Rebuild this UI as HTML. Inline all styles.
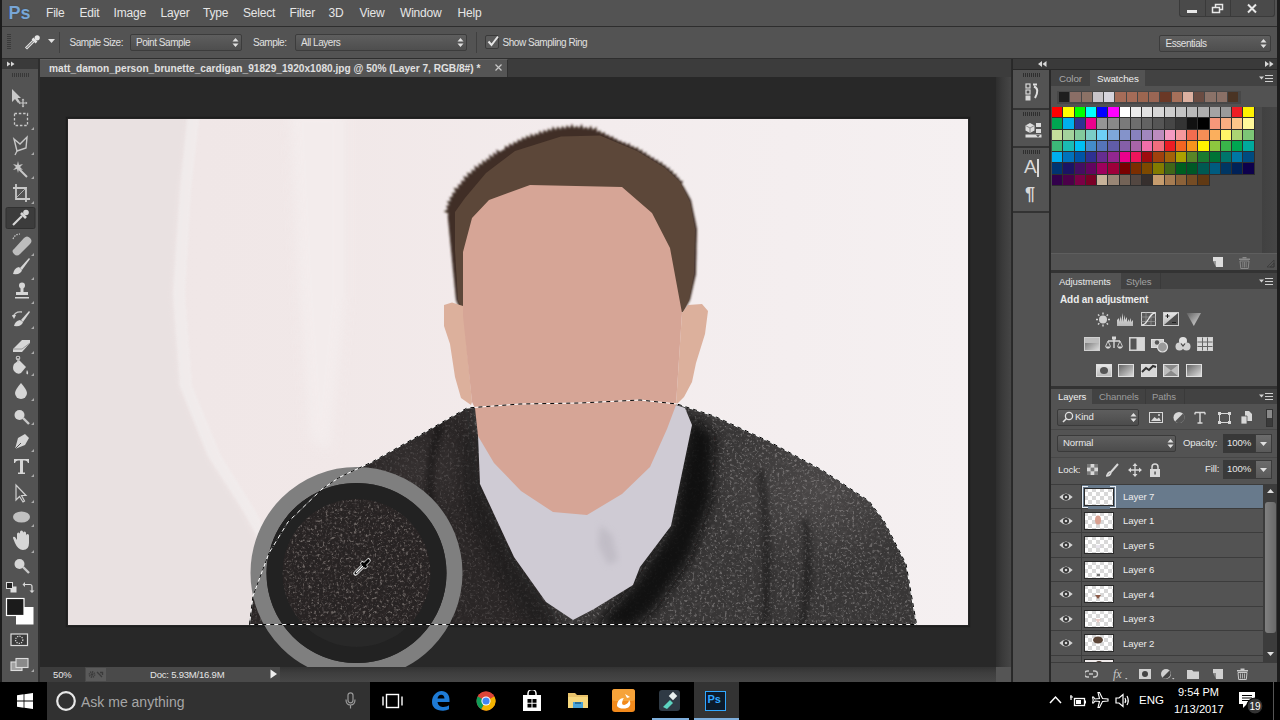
<!DOCTYPE html>
<html><head><meta charset="utf-8">
<style>
*{margin:0;padding:0;box-sizing:border-box}
html,body{width:1280px;height:720px;overflow:hidden;background:#535353;font-family:"Liberation Sans",sans-serif;color:#dcdcdc}
.a{position:absolute}
#sw i{position:absolute;width:10.25px;height:10.25px;display:block}
#rs b{position:absolute;top:92px;width:10.4px;height:10px;display:block}
.menu span{position:absolute;top:5.5px;font-size:12px;letter-spacing:-0.2px;color:#e6e6e6}
.opt{font-size:10px;letter-spacing:-0.45px;color:#e0e0e0}
</style></head><body>
<!-- left black strip -->
<div class="a" style="left:0;top:0;width:2px;height:682px;background:#1c1c1c"></div>
<!-- menu bar -->
<div class="a" style="left:2px;top:0;width:1278px;height:27px;background:#535353;border-bottom:1px solid #2e2e2e"></div>
<div class="a" style="left:8.5px;top:2.5px;font-size:18px;font-weight:bold;color:#78a6d6;letter-spacing:0px;text-shadow:0 0 1px #2a3a4a">Ps</div>
<div class="menu">
<span style="left:46px">File</span><span style="left:79.5px">Edit</span><span style="left:113.5px">Image</span><span style="left:160.5px">Layer</span><span style="left:203px">Type</span><span style="left:243px">Select</span><span style="left:289.5px">Filter</span><span style="left:328.5px">3D</span><span style="left:359.5px">View</span><span style="left:400px">Window</span><span style="left:457.5px">Help</span>
</div>
<!-- window controls -->
<div class="a" style="left:1179px;top:0;width:96px;height:17px;background:#4a4a4a;border:1px solid #3a3a3a;border-top:none;border-radius:0 0 3px 3px"></div>
<div class="a" style="left:1205px;top:0;width:1px;height:17px;background:#3a3a3a"></div>
<div class="a" style="left:1230px;top:0;width:1px;height:17px;background:#3a3a3a"></div>
<div class="a" style="left:1187px;top:10px;width:10px;height:3px;background:#e8e8e8"></div>
<svg class="a" style="left:1211px;top:3px" width="14" height="12"><rect x="4.5" y="1.5" width="7" height="5" fill="none" stroke="#e8e8e8" stroke-width="1.5"/><rect x="1.5" y="4.5" width="7" height="5" fill="#4a4a4a" stroke="#e8e8e8" stroke-width="1.5"/></svg>
<svg class="a" style="left:1246px;top:3px" width="12" height="11"><path d="M2 1.5L10 9.5M10 1.5L2 9.5" stroke="#e8e8e8" stroke-width="2"/></svg>

<!-- options bar -->
<div class="a" style="left:2px;top:27px;width:1278px;height:32px;background:#535353;border-bottom:1px solid #2e2e2e"></div>
<div class="a" style="left:7px;top:34px;width:4px;height:16px;background:repeating-linear-gradient(#3a3a3a 0 1px,transparent 1px 2px)"></div>
<svg class="a" style="left:24px;top:34px" width="17" height="16"><path d="M2 14.5 L10 6.5" stroke="#e6e6e6" stroke-width="3"/><path d="M2.5 14 L9.5 7" stroke="#535353" stroke-width="1"/><path d="M8.5 4.5 L12.5 8.5" stroke="#e6e6e6" stroke-width="2.5"/><circle cx="13.2" cy="3.8" r="2.6" fill="#e6e6e6"/></svg>
<svg class="a" style="left:48px;top:39px" width="7" height="5"><path d="M0 0H7L3.5 4z" fill="#e0e0e0"/></svg>
<div class="a" style="left:59px;top:32px;width:1px;height:21px;background:#404040"></div>
<div class="a opt" style="left:69.5px;top:37px">Sample Size:</div>
<div class="a" style="left:129.5px;top:34px;width:112px;height:17px;background:linear-gradient(#5e5e5e,#4e4e4e);border:1px solid #3c3c3c;border-radius:2px"></div>
<div class="a opt" style="left:136px;top:37px">Point Sample</div>
<svg class="a" style="left:232px;top:37px" width="7" height="11"><path d="M0.5 4.5L3.5 1L6.5 4.5zM0.5 6.5L3.5 10L6.5 6.5z" fill="#e0e0e0"/></svg>
<div class="a opt" style="left:253px;top:37px">Sample:</div>
<div class="a" style="left:294.5px;top:34px;width:172px;height:17px;background:linear-gradient(#5e5e5e,#4e4e4e);border:1px solid #3c3c3c;border-radius:2px"></div>
<div class="a opt" style="left:301px;top:37px">All Layers</div>
<svg class="a" style="left:457px;top:37px" width="7" height="11"><path d="M0.5 4.5L3.5 1L6.5 4.5zM0.5 6.5L3.5 10L6.5 6.5z" fill="#e0e0e0"/></svg>
<div class="a" style="left:476px;top:32px;width:1px;height:21px;background:#404040"></div>
<div class="a" style="left:485px;top:35px;width:14px;height:14px;background:#5a5a5a;border:1px solid #3a3a3a;border-radius:2px"></div>
<svg class="a" style="left:486px;top:34px" width="14" height="14"><path d="M2.5 7.5L5.5 11L12 2.5" fill="none" stroke="#e6e6e6" stroke-width="2"/></svg>
<div class="a opt" style="left:502.5px;top:37px">Show Sampling Ring</div>
<div class="a" style="left:1159px;top:34.5px;width:112px;height:17.5px;background:linear-gradient(#5e5e5e,#4e4e4e);border:1px solid #3c3c3c;border-radius:2px"></div>
<div class="a opt" style="left:1165.5px;top:37.5px">Essentials</div>
<svg class="a" style="left:1260px;top:38px" width="7" height="11"><path d="M0.5 4.5L3.5 1L6.5 4.5zM0.5 6.5L3.5 10L6.5 6.5z" fill="#e0e0e0"/></svg>

<!-- toolbar -->
<div class="a" style="left:2px;top:59px;width:38px;height:623px;background:#535353;border-right:2px solid #2e2e2e"></div>
<div class="a" style="left:2px;top:59px;width:36px;height:10px;background:#3a3a3a"></div>
<svg class="a" style="left:6.5px;top:61px" width="8" height="6"><path d="M0 0.5L3.5 3L0 5.5zM4 0.5L7.5 3L4 5.5z" fill="#d8d8d8"/></svg>
<div class="a" style="left:12px;top:73px;width:18px;height:4px;background:repeating-linear-gradient(90deg,#383838 0 1px,transparent 1px 2px)"></div>

<svg class="a" style="left:2px;top:80px" width="37" height="602" viewBox="0 80 37 602">
<g fill="#c8c8c8" stroke="none">
<!-- small corner triangles -->
<path d="M29 130h3v-3zM29 155h3v-3zM29 179h3v-3zM29 204h3v-3zM29 228h3v-3zM29 256h3v-3zM29 280h3v-3zM29 304h3v-3zM29 329h3v-3zM29 354h3v-3zM29 376h3v-3zM29 401h3v-3zM29 425h3v-3zM29 452h3v-3zM29 477h3v-3zM29 503h3v-3zM29 527h3v-3zM29 553h3v-3zM29 672h3v-3z" fill="#aaa"/>
<!-- move -->
<path d="M10 89L10 102L13 99L16 103L18 102L15.5 98L19 98Z"/>
<path d="M21 100V106M18 103H24" stroke="#c8c8c8" stroke-width="1.2"/>
<path d="M21 98.5L19.5 100.2H22.5ZM21 107.5L19.5 105.8H22.5ZM16.5 103L18.2 101.5V104.5ZM25.5 103L23.8 101.5V104.5Z"/>
</g>
<g fill="none" stroke="#c8c8c8">
<!-- marquee -->
<rect x="12.5" y="113.5" width="13" height="12" stroke-dasharray="2.5 1.8" stroke-width="1.3"/>
<!-- lasso -->
<path d="M12 139L18 144L25 137L24 148L15 151Z" stroke-width="1.4"/>
<path d="M15 151L13 155" stroke-width="1.2"/>
</g>
<g fill="#c8c8c8">
<!-- magic wand -->
<path d="M15 165L16 161L17 165L21 164L18 167L21 170L17 169L16 173L15 169L11 170L14 167L11 164Z"/>
<path d="M17 169L25 177" stroke="#c8c8c8" stroke-width="2"/>
</g>
<g fill="none" stroke="#c8c8c8" stroke-width="1.8">
<!-- crop -->
<path d="M14 184V199H28M11 188H24V202"/>
<path d="M14 198L25 187" stroke-width="0.8"/>
</g>
<!-- eyedropper selected box -->
<rect x="4" y="207.5" width="29" height="21" fill="#3c3c3c" stroke="#303030" stroke-width="1" rx="1.5"/>
<g fill="#d6d6d6">
<path d="M11 225L20 216" stroke="#d6d6d6" stroke-width="2.2"/>
<path d="M19 213L24 218" stroke="#d6d6d6" stroke-width="2.6"/>
<circle cx="24" cy="212.5" r="2.8"/>
<g transform="translate(0,-3)"><!-- healing -->
<path d="M12 252L22 241Q25 238 28 241Q31 244 28 247L18 257Q15 260 12 257Q9 254 12 252Z" fill="#bdbdbd"/>
<path d="M11 242Q13 237 18 237" fill="none" stroke="#c8c8c8" stroke-width="1.2" stroke-dasharray="1.5 1.2"/>
</g><!-- brush -->
<path d="M18 268L27 258L28 259L20 270Z"/>
<path d="M11 274Q12 268 17 267L20 270Q19 275 11 274Z"/>
<!-- stamp -->
<circle cx="20" cy="285.5" r="3"/>
<path d="M18.5 287H21.5V292H26V295H14V292H18.5Z"/>
<rect x="13" y="297" width="14" height="1.5"/>
<!-- history brush -->
<path d="M19 320L27 311L28 312L21 322Z"/>
<path d="M12 326Q13 321 18 320L21 322Q20 327 12 326Z"/>
<path d="M11 317Q13 311 20 312" fill="none" stroke="#c8c8c8" stroke-width="1.3"/>
<path d="M10 315L12 319L14 315Z"/>
<g transform="translate(0,3)"><!-- eraser -->
<path d="M11 346L20 337H28L28 340L20 349H11Z"/>
<path d="M11 346H20L28 340" fill="none" stroke="#888" stroke-width="0.8"/>
<!-- paint bucket -->
<path d="M12 361L17 357L24 364L19 370Q15 372 12 368Q10 365 12 361Z"/>
<path d="M16 355V360" stroke="#c8c8c8" stroke-width="1.3"/>
<circle cx="16" cy="355" r="1.8" fill="none" stroke="#c8c8c8" stroke-width="1.1"/>
<path d="M25 367Q27 370 25.5 371.5Q23.5 371 25 367Z"/>
</g><!-- blur drop -->
<path d="M19 383Q25 390 25 393A6 6 0 0 1 13 393Q13 390 19 383Z"/>
<g transform="translate(0,2)"><!-- dodge / zoom glass -->
<circle cx="17.5" cy="413" r="5"/>
<path d="M21 416L27 422" stroke="#c8c8c8" stroke-width="2.4"/>
</g><!-- pen -->
<path d="M13 449L16 438L23 434L27 438L23 445ZM18 441L20 443" />
<path d="M13 449L19 443" stroke="#535353" stroke-width="1"/>
<!-- type -->
<path d="M12 459H27V463H26Q25.5 460.5 23 460.5H21V472.5H23V474H16V472.5H18V460.5H16Q13.5 460.5 13 463H12Z"/>
<!-- path select -->
<path d="M14 485V500L17.5 496.5L21 502L22.5 501L19.5 495.5H24Z" fill="none" stroke="#d0d0d0" stroke-width="1.2"/>
<!-- ellipse -->
<ellipse cx="19.5" cy="517" rx="8.5" ry="5.5" fill="#c0c0c0"/>
<!-- hand -->
<path d="M13 543L11 538Q11 536 13 537L15 540V534Q15 532.5 16.5 532.5Q18 532.5 18 534V539V532Q18 530.5 19.5 530.5Q21 530.5 21 532V539V533Q21 531.5 22.5 531.5Q24 531.5 24 533V540V535.5Q24 534 25.5 534Q27 534 27 535.5V543Q27 550 21 550Q16 550 13 543Z"/>
<!-- zoom -->
<circle cx="17.5" cy="564" r="5"/>
<path d="M21 567L27 573" stroke="#c8c8c8" stroke-width="2.4"/>
<!-- default colors & swap -->
<rect x="8.5" y="586.5" width="6" height="6" fill="#ddd"/>
<rect x="4.5" y="582.5" width="6" height="6" fill="#222" stroke="#ddd" stroke-width="1"/>
<path d="M22.5 584.5H28Q30 584.5 30 586.5V591" fill="none" stroke="#ddd" stroke-width="1.2"/>
<path d="M20.5 584.5L23 582V587ZM30 593L27.5 590.5H32.5Z"/>
</g>
<!-- fg/bg -->
<rect x="14" y="607" width="17.5" height="17.5" fill="#fff"/>
<rect x="4.5" y="598.5" width="17.5" height="17" fill="#1b1b1b" stroke="#fff" stroke-width="1.2"/>
<!-- quick mask -->
<rect x="9" y="634" width="16.5" height="11.5" fill="#3a3a3a" stroke="#ddd" stroke-width="1.2"/>
<circle cx="17.2" cy="639.8" r="3.6" fill="none" stroke="#ddd" stroke-width="1.2" stroke-dasharray="1.2 1.2"/>
<!-- screen mode -->
<rect x="9" y="662" width="11" height="8.5" fill="#a0a0a0" stroke="#ddd" stroke-width="1.1"/>
<rect x="14" y="658.5" width="12" height="9" fill="#8a8a8a" stroke="#ddd" stroke-width="1.1"/>
</svg>


<!-- doc tab bar -->
<div class="a" style="left:40px;top:59px;width:972px;height:18px;background:#3c3c3c"></div>
<div class="a" style="left:40px;top:59px;width:468px;height:18px;background:#555;border-top:1px solid #606060;border-right:1px solid #303030"></div>
<div class="a" style="left:49px;top:62.5px;font-size:10.15px;font-weight:bold;color:#e0e0e0">matt_damon_person_brunette_cardigan_91829_1920x1080.jpg @ 50% (Layer 7, RGB/8#) *</div>
<svg class="a" style="left:495px;top:64px" width="7" height="7"><path d="M0.5 0.5L6.5 6.5M6.5 0.5L0.5 6.5" stroke="#c8c8c8" stroke-width="1.2"/></svg>
<!-- canvas -->
<div class="a" style="left:40px;top:77px;width:956px;height:590px;background:#282828"></div>
<div class="a" style="left:996px;top:77px;width:16px;height:590px;background:linear-gradient(90deg,#2e2e2e,#3a3a3a 40%,#474747)"></div><div class="a" style="left:1011px;top:59px;width:2px;height:623px;background:#2a2a2a"></div>
<svg class="a" style="left:0;top:0" width="1280" height="720" viewBox="0 0 1280 720">
<defs>
<clipPath id="img"><rect x="68" y="119" width="900" height="506"/></clipPath>
<clipPath id="cv"><rect x="40" y="77" width="956" height="590"/></clipPath>
<clipPath id="swc"><path d="M249 625 L253 596 L269 553 L288 522 L322 489 L340 477 L372 462 L420 435 L467 408 L520 404 L600 404 L677 404 L714 416 L768 441 L822 470 L869 501 L884 521 L906 564 L917 625 Z"/></clipPath>
<linearGradient id="bg" gradientUnits="userSpaceOnUse" x1="68" y1="0" x2="968" y2="0">
<stop offset="0" stop-color="#efe6e6"/><stop offset="0.3" stop-color="#f1e8e8"/><stop offset="0.6" stop-color="#f3eced"/><stop offset="1" stop-color="#f5f0f1"/>
</linearGradient>
<radialGradient id="shl" cx="0.5" cy="0.5" r="0.5"><stop offset="0" stop-color="#5a5656" stop-opacity="0.55"/><stop offset="1" stop-color="#5a5656" stop-opacity="0"/></radialGradient>
<filter id="noise" x="0" y="0" width="100%" height="100%">
<feTurbulence type="fractalNoise" baseFrequency="0.5" numOctaves="1" seed="7" result="n"/>
<feGaussianBlur in="n" stdDeviation="0.9" result="nb"/>
<feColorMatrix in="nb" type="matrix" values="0 0 0 0 0.5  0 0 0 0 0.48  0 0 0 0 0.48  0 0 0 3.5 -1.75" result="c"/>
<feComposite in="c" in2="SourceGraphic" operator="in"/>
</filter>
<filter id="noise2" x="0" y="0" width="100%" height="100%">
<feTurbulence type="fractalNoise" baseFrequency="0.35" numOctaves="2" seed="11" result="n"/>
<feColorMatrix in="n" type="matrix" values="0 0 0 0 0.36  0 0 0 0 0.32  0 0 0 0 0.3  0 0 0 5 -2.9" result="c0"/>
<feGaussianBlur in="c0" stdDeviation="0.6" result="c"/>
<feComposite in="c" in2="SourceGraphic" operator="in"/>
</filter>
<filter id="speck" x="0" y="0" width="100%" height="100%">
<feTurbulence type="fractalNoise" baseFrequency="0.4" numOctaves="2" seed="21" result="n"/>
<feColorMatrix in="n" type="matrix" values="0 0 0 0 0.5  0 0 0 0 0.48  0 0 0 0 0.48  0 0 0 6 -3.4" result="c0"/>
<feGaussianBlur in="c0" stdDeviation="0.6" result="c"/>
<feComposite in="c" in2="SourceGraphic" operator="in"/>
</filter>
<filter id="blur1"><feGaussianBlur stdDeviation="0.9"/></filter>
<filter id="blur3" x="-20%" y="-20%" width="140%" height="140%"><feGaussianBlur stdDeviation="3"/></filter>
<filter id="blur6" x="-30%" y="-30%" width="160%" height="160%"><feGaussianBlur stdDeviation="6"/></filter>
</defs>
<rect x="66.5" y="117.5" width="903" height="509" fill="none" stroke="#1c1c1c" stroke-width="1.5" opacity="0.8"/>
<g clip-path="url(#img)">
<rect x="68" y="119" width="900" height="506" fill="url(#bg)"/>
<path filter="url(#blur3)" fill="#e9e1e1" d="M60 110 L190 110 L180 189 L173 295 L180 386 L208 456 L244 512 L258 541 L270 630 L60 630 Z"/>
<path filter="url(#blur1)" fill="#f2efef" opacity="0.6" d="M188 110 L200 110 L191 189 L185 295 L192 386 L221 456 L256 512 L270 541 L262 545 L244 512 L208 456 L180 386 L173 295 L180 189 Z"/>
<path filter="url(#blur6)" fill="#f4eeee" opacity="0.8" d="M290 110 L345 110 L345 300 L330 450 L310 440 L300 300 Z"/>
<!-- hair -->
<path fill="#3f2f25" filter="url(#blur1)" d="M461.0 312.0 L460.0 309.6 L459.0 307.2 L458.0 304.8 L457.0 302.4 L456.0 300.0 L455.8 297.7 L455.5 295.5 L455.3 293.2 L455.1 290.9 L454.9 288.6 L454.6 286.4 L454.4 284.1 L454.2 281.8 L454.0 279.5 L453.7 277.3 L453.5 275.0 L453.3 272.7 L453.0 270.5 L452.8 268.2 L452.6 265.9 L452.4 263.6 L452.1 261.4 L451.9 259.1 L451.7 256.8 L451.5 254.5 L451.2 252.3 L451.0 250.0 L450.8 247.7 L450.6 245.4 L450.3 243.2 L450.1 240.9 L449.9 238.6 L449.7 236.3 L449.4 234.1 L449.2 231.8 L449.0 229.5 L448.8 227.2 L448.6 224.9 L448.3 222.7 L448.1 220.4 L447.9 218.1 L447.7 215.8 L448.4 213.5 L443.8 211.6 L448.0 209.1 L445.8 206.0 L449.6 205.0 L446.6 201.4 L451.2 200.7 L449.1 197.4 L452.8 196.5 L452.0 192.8 L455.8 192.6 L453.6 187.8 L458.8 188.6 L457.6 184.6 L461.7 184.6 L460.9 180.6 L465.0 181.0 L463.2 175.9 L468.4 177.3 L466.7 172.4 L471.7 173.7 L471.3 169.6 L475.3 170.7 L474.1 165.6 L478.9 167.7 L478.3 163.2 L482.6 164.8 L482.0 160.1 L486.2 162.2 L486.1 158.3 L489.8 159.7 L489.0 154.6 L493.5 157.2 L492.9 152.4 L497.1 154.6 L496.2 149.5 L500.7 152.1 L502.0 150.0 L504.5 149.8 L505.0 145.6 L508.7 147.6 L509.2 143.3 L512.9 145.4 L513.6 141.4 L517.1 143.2 L517.8 139.3 L521.3 141.0 L522.2 137.1 L525.4 139.2 L526.5 135.2 L529.8 137.8 L530.7 133.3 L534.1 136.5 L535.3 133.0 L538.4 135.1 L539.2 130.4 L542.7 133.7 L543.8 129.6 L547.0 132.3 L548.1 128.3 L551.2 130.9 L552.8 126.2 L555.8 130.3 L557.6 126.2 L560.5 129.6 L562.3 125.8 L565.1 129.0 L566.9 124.9 L569.8 128.3 L571.9 123.7 L574.2 128.2 L576.9 125.4 L578.9 128.6 L581.7 124.1 L583.6 129.1 L586.2 126.4 L588.2 129.5 L591.0 125.4 L592.7 129.9 L596.6 126.8 L596.9 131.9 L600.3 130.2 L601.3 133.5 L604.6 132.1 L605.6 135.5 L608.7 134.5 L609.8 137.5 L612.9 136.1 L614.0 139.3 L616.8 138.6 L618.1 141.2 L620.9 140.4 L622.3 143.0 L625.2 142.1 L626.4 144.9 L629.7 143.1 L630.5 146.8 L633.4 145.8 L634.7 148.6 L638.0 147.1 L638.7 150.7 L642.2 149.4 L642.7 153.2 L646.2 151.9 L646.7 155.6 L649.8 154.9 L650.7 158.0 L653.8 157.3 L654.7 160.4 L657.9 159.6 L658.7 162.9 L662.1 161.8 L662.7 165.3 L665.8 164.9 L666.3 168.0 L669.8 167.6 L669.6 171.1 L673.1 170.6 L672.9 174.2 L676.5 173.7 L676.3 177.3 L679.2 177.5 L679.5 180.4 L683.1 180.9 L681.7 184.3 L683.3 186.0 L684.4 188.0 L685.5 190.0 L686.6 192.0 L687.7 194.0 L688.8 196.0 L689.9 198.0 L691.0 200.0 L691.5 202.2 L691.9 204.5 L692.4 206.7 L692.8 208.9 L693.3 211.2 L693.8 213.4 L694.2 215.6 L694.7 217.8 L695.2 220.1 L695.6 222.3 L696.1 224.5 L696.5 226.8 L697.0 229.0 L697.0 231.2 L696.9 233.5 L696.9 235.8 L696.8 238.0 L696.8 240.2 L696.7 242.5 L696.6 244.8 L696.6 247.0 L696.5 249.2 L696.5 251.5 L696.5 253.8 L696.4 256.0 L696.4 258.2 L696.3 260.5 L696.2 262.8 L696.2 265.0 L696.1 267.2 L696.1 269.5 L696.0 271.8 L696.0 274.0 L695.5 276.2 L695.0 278.3 L694.5 280.5 L694.0 282.7 L693.5 284.8 L693.0 287.0 L692.5 289.2 L692.0 291.3 L691.5 293.5 L691.0 295.7 L690.5 297.8 L690.0 300.0 L688.8 302.0 L687.7 304.0 L686.5 306.0 L685.3 308.0 L684.2 310.0 L683.0 312.0 Z"/>
<path fill="#5c4739" d="M463 312 L458 300 L455 250 L455 212 L465 198 L486 173 L515 151 L561 136.5 L600 135.5 L637 151 L665 168 L680 182 L690 202 L695 229 L694 274 L689 300 L683 312 Z"/>
<!-- sweater -->
<g clip-path="url(#swc)">
<rect x="240" y="400" width="690" height="230" fill="#383636"/>
<ellipse cx="820" cy="490" rx="110" ry="80" fill="url(#shl)"/>
<ellipse cx="420" cy="470" rx="70" ry="45" fill="url(#shl)"/>
<rect x="240" y="400" width="690" height="230" fill="#333131" filter="url(#noise)" opacity="0.45"/>
<rect x="240" y="400" width="690" height="230" fill="#333131" filter="url(#speck)" opacity="0.35"/>
<path fill="#1a1818" opacity="0.45" filter="url(#blur6)" d="M240 470 L470 400 L482 484 L515 557 L546 602 L560 630 L240 630 Z"/>
<path fill="#0b0a0a" opacity="0.9" filter="url(#blur6)" d="M690 415 L715 435 L712 500 L690 560 L655 610 L630 630 L596 625 L633 585 L671 526 Z"/>
<path fill="#151414" opacity="0.45" filter="url(#blur6)" d="M465 430 L480 440 L482 484 L515 557 L546 602 L560 630 L530 630 L500 580 L470 520 L462 470 Z"/>
<path fill="none" stroke="#000" stroke-width="6" opacity="0.45" filter="url(#blur3)" d="M760 470 Q770 540 765 625 M805 520 Q812 570 802 625 M440 425 Q425 470 432 520 Q440 570 450 625"/>
</g>
<!-- ears -->
<path fill="#dcb09c" d="M444 305 L452 302.5 L463 306 L472 402 L471 405 L461 398 L455 377 L450 344 L444 326 Z"/>
<path fill="#dcb09c" d="M682 313 L688 305 L702 304 L708 311 L705 334 L696 363 L692 382 L684 397 L676 405 Z"/>
<!-- collar -->
<path fill="#cfcbd4" d="M478 435 L480 484 L514 557 L546 602 L573 620 L594 609 L633 585 L640 567 L671 526 L692 425 L685 408 L676 405 L600 420 L500 420 Z"/>
<path fill="#b8b4bd" opacity="0.6" filter="url(#blur3)" d="M600 525 L612 535 L618 560 L608 565 L598 545 Z"/>
<!-- face -->
<path fill="#d6a596" d="M489 200 L530 185 L622 187 L652 213 L670 248 L682 313 L676 405 L667 429 L650 467 L622 494 L587 515 L553 512 L521 491 L494 463 L478 436 L475 408 L472 402 L463 316 L463 252 L472 218 Z"/>
</g>
<!-- sampling ring -->
<g clip-path="url(#cv)">
<g clip-path="url(#img)"><circle cx="356.5" cy="573" r="74" fill="#0f0e0d" opacity="0.1"/><circle cx="356.5" cy="573" r="74" fill="#7a6e66" filter="url(#noise2)" opacity="0.55"/></g>
<circle cx="356.5" cy="573" r="98" fill="none" stroke="#7f7f7f" stroke-width="16"/>
<path fill="#222222" fill-rule="evenodd" d="M356.5 483 a90 90 0 1 0 0.01 0 Z M356.5 499 a74 74 0 1 0 0.01 0 Z"/>
</g>
<!-- selection marching ants -->
<g clip-path="url(#img)" fill="none" stroke-width="1">
<path d="M249.5 624.5 L253 596 L269 553 L288 522 L322 489 L340 477 L372 462 L420 435 L467 408 L520 404 L580 403 L640 400 L677 404 L714 416 L768 441 L822 470 L869 501 L884 521 L906 564 L916.5 624.5 Z" stroke="#ffffff"/>
<path d="M249.5 624.5 L253 596 L269 553 L288 522 L322 489 L340 477 L372 462 L420 435 L467 408 L520 404 L580 403 L640 400 L677 404 L714 416 L768 441 L822 470 L869 501 L884 521 L906 564 L916.5 624.5 Z" stroke="#000" stroke-dasharray="4 4"/>
</g>
<svg x="352" y="557" width="20" height="20"><g stroke="#ddd" stroke-width="4.5" stroke-linecap="round" fill="none"><path d="M3.5 16.5L12 8"/><path d="M10.5 6.5L13.5 9.5"/><path d="M13 7L16.5 3.5"/></g><g stroke-linecap="round" fill="none"><path d="M3.8 16.2L11.5 8.5" stroke="#111" stroke-width="2.6"/><path d="M4.5 15.5L10.5 9.5" stroke="#fff" stroke-width="1.2"/><path d="M10.5 6.5L13.5 9.5" stroke="#000" stroke-width="2.8"/><path d="M13 7L16.3 3.7" stroke="#000" stroke-width="3"/></g></svg>
</svg>

<!-- status bar -->
<div class="a" style="left:40px;top:667px;width:956px;height:15px;background:linear-gradient(#333,#3e3e3e 40%,#474747)"></div><div class="a" style="left:40px;top:667px;width:45px;height:15px;background:#3c3c3c"></div>
<div class="a" style="left:85px;top:667px;width:195px;height:15px;background:#4a4a4a"></div>
<div class="a" style="left:86px;top:668px;width:20px;height:13px;background:#5a5a5a"></div><svg class="a" style="left:88px;top:670px" width="17" height="9"><circle cx="4" cy="4.5" r="2.6" fill="none" stroke="#3a3a3a" stroke-width="1.6" stroke-dasharray="1.2 0.8"/><circle cx="4" cy="4.5" r="1.2" fill="#3a3a3a"/><path d="M9 2L14 7M12 2.5L14.5 2.5L14.5 5" fill="none" stroke="#3a3a3a" stroke-width="1.3"/></svg>
<div class="a" style="left:53px;top:669px;font-size:9.5px;letter-spacing:-0.1px;color:#e6e6e6">50%</div>
<div class="a" style="left:150px;top:669px;font-size:9.5px;letter-spacing:-0.2px;color:#e6e6e6">Doc: 5.93M/16.9M</div>
<svg class="a" style="left:270px;top:669px" width="8" height="10"><path d="M0.5 0.5L7 5L0.5 9.5z" fill="#f0f0f0"/></svg>

<!-- right dock -->
<div class="a" style="left:1012px;top:59px;width:268px;height:623px;background:#282828"></div>
<div class="a" style="left:1013px;top:59px;width:264px;height:10px;background:#3a3a3a"></div>
<svg class="a" style="left:1038px;top:61px" width="9" height="6"><path d="M4 0L0 3L4 6zM8.5 0L4.5 3L8.5 6z" fill="#d8d8d8"/></svg>
<svg class="a" style="left:1265px;top:61px" width="9" height="6"><path d="M0 0L4 3L0 6zM4.5 0L8.5 3L4.5 6z" fill="#d8d8d8"/></svg>
<div class="a" style="left:1013px;top:70px;width:36px;height:612px;background:#535353"></div><div class="a" style="left:996px;top:667px;width:15px;height:15px;background:#555"></div>
<div class="a" style="left:1013px;top:107.5px;width:36px;height:2px;background:#333"></div>
<div class="a" style="left:1013px;top:145.5px;width:36px;height:2px;background:#333"></div>
<div class="a" style="left:1013px;top:210.5px;width:36px;height:2px;background:#333"></div>
<div class="a" style="left:1023px;top:73px;width:18px;height:4px;background:repeating-linear-gradient(90deg,#2e2e2e 0 1px,transparent 1px 2px)"></div>
<div class="a" style="left:1023px;top:111.5px;width:18px;height:4px;background:repeating-linear-gradient(90deg,#2e2e2e 0 1px,transparent 1px 2px)"></div>
<div class="a" style="left:1023px;top:150px;width:18px;height:4px;background:repeating-linear-gradient(90deg,#2e2e2e 0 1px,transparent 1px 2px)"></div>
<svg class="a" style="left:1025px;top:83px" width="16" height="18"><rect x="1" y="1" width="4" height="4" fill="none" stroke="#d8d8d8" stroke-width="1.2"/><rect x="1" y="7" width="4" height="4" fill="none" stroke="#d8d8d8" stroke-width="1.2"/><rect x="0.5" y="12.5" width="5" height="5" fill="#d8d8d8"/><path d="M8 1.5H12 M9 3.5 Q15 6 10 15" fill="none" stroke="#e0e0e0" stroke-width="2"/></svg>
<svg class="a" style="left:1025px;top:122px" width="17" height="16"><path d="M5 1L9.5 3.5V8.5L5 11L0.5 8.5V3.5Z" fill="#ddd"/><path d="M0.5 3.5L5 6L9.5 3.5M5 6V11" fill="none" stroke="#777" stroke-width="0.8"/><rect x="11" y="1" width="5" height="4" fill="#ddd"/><rect x="11" y="7" width="5" height="4" fill="#ddd"/><rect x="0.5" y="12.5" width="16" height="3" fill="#ddd"/><path d="M11 13.2h4l-2 1.8z" fill="#333"/></svg>
<div class="a" style="left:1024px;top:157px;font-size:19px;color:#d8d8d8;line-height:20px">A</div>
<div class="a" style="left:1037px;top:159px;width:1.5px;height:18px;background:#d8d8d8"></div>
<div class="a" style="left:1025px;top:184px;font-size:18px;font-weight:bold;color:#d8d8d8;line-height:20px">¶</div>

<!-- panels -->
<div class="a" style="left:1051px;top:70px;width:226px;height:612px;background:#535353"></div>
<div class="a" style="left:1051px;top:70px;width:226px;height:16px;background:#424242"></div>
<div class="a" style="left:1090px;top:70px;width:55px;height:16px;background:#535353"></div>
<div class="a" style="left:1059px;top:73px;font-size:9.8px;letter-spacing:-0.1px;color:#a8a8a8">Color</div>
<div class="a" style="left:1097px;top:73px;font-size:9.8px;letter-spacing:-0.1px;color:#f0f0f0">Swatches</div>
<svg class="a" style="left:1259px;top:74px" width="15" height="10"><path d="M0 2.5H5L2.5 5.5z" fill="#d0d0d0"/><path d="M6 1.5H14M6 4.5H14M6 7.5H14" stroke="#d0d0d0" stroke-width="1.2"/></svg>
<div class="a" style="left:1051px;top:86px;width:226px;height:20.5px;background:#525252"></div>
<div class="a" style="left:1051px;top:106.5px;width:211px;height:146.5px;background:#4a4a4a"></div>
<div class="a" style="left:1262px;top:106.5px;width:15px;height:146.5px;background:linear-gradient(90deg,#414141,#464646)"></div>
<div class="a" style="left:1057px;top:90.5px;width:184px;height:13px;background:#474747"></div>
<div id="rs">
<b style="left:1059.00px;background:#1e1e1e"></b>
<b style="left:1070.25px;background:#8a6e66"></b>
<b style="left:1081.50px;background:#8c7266"></b>
<b style="left:1092.75px;background:#c8c4c8"></b>
<b style="left:1104.00px;background:#d6d4dc"></b>
<b style="left:1115.25px;background:#a56c58"></b>
<b style="left:1126.50px;background:#a56c58"></b>
<b style="left:1137.75px;background:#9c6650"></b>
<b style="left:1149.00px;background:#9a6654"></b>
<b style="left:1160.25px;background:#6a3826"></b>
<b style="left:1171.50px;background:#a6705a"></b>
<b style="left:1182.75px;background:#dcb0a0"></b>
<b style="left:1194.00px;background:#6a4c42"></b>
<b style="left:1205.25px;background:#8a7268"></b>
<b style="left:1216.50px;background:#8a7066"></b>
<b style="left:1227.75px;background:#4a3424"></b>
</div>
<div id="sw">
<div class="a" style="left:1051.5px;top:106.5px;width:203px;height:68.5px;background:#2e2e2e"></div>
<div class="a" style="left:1051.5px;top:174.5px;width:158.5px;height:11.5px;background:#2e2e2e"></div>
<i style="left:1052.00px;top:107.00px;background:#ff0000"></i>
<i style="left:1063.25px;top:107.00px;background:#ffff00"></i>
<i style="left:1074.50px;top:107.00px;background:#00ff00"></i>
<i style="left:1085.75px;top:107.00px;background:#00ffff"></i>
<i style="left:1097.00px;top:107.00px;background:#0000ff"></i>
<i style="left:1108.25px;top:107.00px;background:#ff00ff"></i>
<i style="left:1119.50px;top:107.00px;background:#ffffff"></i>
<i style="left:1130.75px;top:107.00px;background:#ebebeb"></i>
<i style="left:1142.00px;top:107.00px;background:#e1e1e1"></i>
<i style="left:1153.25px;top:107.00px;background:#d7d7d7"></i>
<i style="left:1164.50px;top:107.00px;background:#cdcdcd"></i>
<i style="left:1175.75px;top:107.00px;background:#c3c3c3"></i>
<i style="left:1187.00px;top:107.00px;background:#b9b9b9"></i>
<i style="left:1198.25px;top:107.00px;background:#aeaeae"></i>
<i style="left:1209.50px;top:107.00px;background:#a4a4a4"></i>
<i style="left:1220.75px;top:107.00px;background:#9a9a9a"></i>
<i style="left:1232.00px;top:107.00px;background:#ed1c24"></i>
<i style="left:1243.25px;top:107.00px;background:#fff200"></i>
<i style="left:1052.00px;top:118.25px;background:#00a651"></i>
<i style="left:1063.25px;top:118.25px;background:#00aeef"></i>
<i style="left:1074.50px;top:118.25px;background:#2e3192"></i>
<i style="left:1085.75px;top:118.25px;background:#ec008c"></i>
<i style="left:1097.00px;top:118.25px;background:#959595"></i>
<i style="left:1108.25px;top:118.25px;background:#898989"></i>
<i style="left:1119.50px;top:118.25px;background:#7a7a7a"></i>
<i style="left:1130.75px;top:118.25px;background:#6e6e6e"></i>
<i style="left:1142.00px;top:118.25px;background:#626262"></i>
<i style="left:1153.25px;top:118.25px;background:#555555"></i>
<i style="left:1164.50px;top:118.25px;background:#464646"></i>
<i style="left:1175.75px;top:118.25px;background:#343434"></i>
<i style="left:1187.00px;top:118.25px;background:#111111"></i>
<i style="left:1198.25px;top:118.25px;background:#000000"></i>
<i style="left:1209.50px;top:118.25px;background:#f7977a"></i>
<i style="left:1220.75px;top:118.25px;background:#f9ad81"></i>
<i style="left:1232.00px;top:118.25px;background:#fdc68a"></i>
<i style="left:1243.25px;top:118.25px;background:#fff79a"></i>
<i style="left:1052.00px;top:129.50px;background:#c4df9b"></i>
<i style="left:1063.25px;top:129.50px;background:#a3d39c"></i>
<i style="left:1074.50px;top:129.50px;background:#82ca9d"></i>
<i style="left:1085.75px;top:129.50px;background:#7bcdc8"></i>
<i style="left:1097.00px;top:129.50px;background:#6ecff6"></i>
<i style="left:1108.25px;top:129.50px;background:#7ea7d8"></i>
<i style="left:1119.50px;top:129.50px;background:#8493ca"></i>
<i style="left:1130.75px;top:129.50px;background:#8882be"></i>
<i style="left:1142.00px;top:129.50px;background:#a187be"></i>
<i style="left:1153.25px;top:129.50px;background:#bc8cbf"></i>
<i style="left:1164.50px;top:129.50px;background:#f49ac2"></i>
<i style="left:1175.75px;top:129.50px;background:#f6989d"></i>
<i style="left:1187.00px;top:129.50px;background:#f26c4f"></i>
<i style="left:1198.25px;top:129.50px;background:#f68e56"></i>
<i style="left:1209.50px;top:129.50px;background:#fbaf5d"></i>
<i style="left:1220.75px;top:129.50px;background:#fff568"></i>
<i style="left:1232.00px;top:129.50px;background:#acd373"></i>
<i style="left:1243.25px;top:129.50px;background:#7cc576"></i>
<i style="left:1052.00px;top:140.75px;background:#3cb878"></i>
<i style="left:1063.25px;top:140.75px;background:#1abbb4"></i>
<i style="left:1074.50px;top:140.75px;background:#00bff3"></i>
<i style="left:1085.75px;top:140.75px;background:#438cca"></i>
<i style="left:1097.00px;top:140.75px;background:#5574b9"></i>
<i style="left:1108.25px;top:140.75px;background:#605ca8"></i>
<i style="left:1119.50px;top:140.75px;background:#855fa8"></i>
<i style="left:1130.75px;top:140.75px;background:#a864a8"></i>
<i style="left:1142.00px;top:140.75px;background:#f06eaa"></i>
<i style="left:1153.25px;top:140.75px;background:#f26d7d"></i>
<i style="left:1164.50px;top:140.75px;background:#ed1c24"></i>
<i style="left:1175.75px;top:140.75px;background:#f26522"></i>
<i style="left:1187.00px;top:140.75px;background:#f7941d"></i>
<i style="left:1198.25px;top:140.75px;background:#fff200"></i>
<i style="left:1209.50px;top:140.75px;background:#8dc63f"></i>
<i style="left:1220.75px;top:140.75px;background:#39b54a"></i>
<i style="left:1232.00px;top:140.75px;background:#00a651"></i>
<i style="left:1243.25px;top:140.75px;background:#00a99d"></i>
<i style="left:1052.00px;top:152.00px;background:#00aeef"></i>
<i style="left:1063.25px;top:152.00px;background:#0072bc"></i>
<i style="left:1074.50px;top:152.00px;background:#0054a6"></i>
<i style="left:1085.75px;top:152.00px;background:#2e3192"></i>
<i style="left:1097.00px;top:152.00px;background:#662d91"></i>
<i style="left:1108.25px;top:152.00px;background:#92278f"></i>
<i style="left:1119.50px;top:152.00px;background:#ec008c"></i>
<i style="left:1130.75px;top:152.00px;background:#ed145b"></i>
<i style="left:1142.00px;top:152.00px;background:#9e0b0f"></i>
<i style="left:1153.25px;top:152.00px;background:#a0410d"></i>
<i style="left:1164.50px;top:152.00px;background:#a36209"></i>
<i style="left:1175.75px;top:152.00px;background:#aba000"></i>
<i style="left:1187.00px;top:152.00px;background:#598527"></i>
<i style="left:1198.25px;top:152.00px;background:#1a7b30"></i>
<i style="left:1209.50px;top:152.00px;background:#007236"></i>
<i style="left:1220.75px;top:152.00px;background:#00746b"></i>
<i style="left:1232.00px;top:152.00px;background:#0076a3"></i>
<i style="left:1243.25px;top:152.00px;background:#004b80"></i>
<i style="left:1052.00px;top:163.25px;background:#003471"></i>
<i style="left:1063.25px;top:163.25px;background:#1b1464"></i>
<i style="left:1074.50px;top:163.25px;background:#440e62"></i>
<i style="left:1085.75px;top:163.25px;background:#630460"></i>
<i style="left:1097.00px;top:163.25px;background:#9e005d"></i>
<i style="left:1108.25px;top:163.25px;background:#9e0039"></i>
<i style="left:1119.50px;top:163.25px;background:#790000"></i>
<i style="left:1130.75px;top:163.25px;background:#7b2e00"></i>
<i style="left:1142.00px;top:163.25px;background:#7d4900"></i>
<i style="left:1153.25px;top:163.25px;background:#827b00"></i>
<i style="left:1164.50px;top:163.25px;background:#406618"></i>
<i style="left:1175.75px;top:163.25px;background:#005e20"></i>
<i style="left:1187.00px;top:163.25px;background:#005826"></i>
<i style="left:1198.25px;top:163.25px;background:#005952"></i>
<i style="left:1209.50px;top:163.25px;background:#005b7f"></i>
<i style="left:1220.75px;top:163.25px;background:#003663"></i>
<i style="left:1232.00px;top:163.25px;background:#002157"></i>
<i style="left:1243.25px;top:163.25px;background:#0d004c"></i>
<i style="left:1052.00px;top:174.50px;background:#32004b"></i>
<i style="left:1063.25px;top:174.50px;background:#4b0049"></i>
<i style="left:1074.50px;top:174.50px;background:#7b0046"></i>
<i style="left:1085.75px;top:174.50px;background:#7a0026"></i>
<i style="left:1097.00px;top:174.50px;background:#c7b299"></i>
<i style="left:1108.25px;top:174.50px;background:#998675"></i>
<i style="left:1119.50px;top:174.50px;background:#736357"></i>
<i style="left:1130.75px;top:174.50px;background:#534741"></i>
<i style="left:1142.00px;top:174.50px;background:#362f2d"></i>
<i style="left:1153.25px;top:174.50px;background:#c69c6d"></i>
<i style="left:1164.50px;top:174.50px;background:#a67c52"></i>
<i style="left:1175.75px;top:174.50px;background:#8c6239"></i>
<i style="left:1187.00px;top:174.50px;background:#754c24"></i>
<i style="left:1198.25px;top:174.50px;background:#603913"></i>
</div>
<div class="a" style="left:1051px;top:253px;width:226px;height:17px;background:#535353;border-top:1px solid #5e5e5e"></div>
<svg class="a" style="left:1212px;top:256px" width="12" height="12"><path d="M1 1H11V11H4V5H1z" fill="#dcdcdc"/><path d="M1 5H4V11z" fill="#999"/></svg>
<svg class="a" style="left:1239px;top:257px" width="11" height="12"><rect x="0" y="1.5" width="11" height="1.5" fill="#8a8a8a"/><rect x="3.5" y="0" width="4" height="1.5" fill="#8a8a8a"/><path d="M1 4H10L9.2 11.5H1.8z" fill="none" stroke="#8a8a8a" stroke-width="1"/><path d="M3.8 5V10.5M5.5 5V10.5M7.2 5V10.5" stroke="#8a8a8a" stroke-width="0.8"/></svg>
<svg class="a" style="left:1266px;top:259px" width="9" height="9"><path d="M8 1V8H1ZM8 4V8H4Z" fill="none" stroke="#3a3a3a" stroke-width="0.8"/></svg>
<div class="a" style="left:1051px;top:270px;width:226px;height:3px;background:#333"></div>

<div class="a" style="left:1051px;top:273px;width:226px;height:16px;background:#424242"></div>
<div class="a" style="left:1051px;top:273px;width:70px;height:16px;background:#535353"></div>
<div class="a" style="left:1059px;top:275.5px;font-size:9.6px;letter-spacing:-0.1px;color:#e8e8e8">Adjustments</div>
<div class="a" style="left:1126px;top:275.5px;font-size:9.6px;letter-spacing:-0.1px;color:#a0a0a0">Styles</div>
<div class="a" style="left:1160px;top:273px;width:1px;height:16px;background:#3a3a3a"></div>
<svg class="a" style="left:1259px;top:277px" width="15" height="10"><path d="M0 2.5H5L2.5 5.5z" fill="#d0d0d0"/><path d="M6 1.5H14M6 4.5H14M6 7.5H14" stroke="#d0d0d0" stroke-width="1.2"/></svg>
<div class="a" style="left:1060px;top:294px;font-size:10px;letter-spacing:-0.1px;font-weight:bold;color:#ececec">Add an adjustment</div>
<svg class="a" style="left:1080px;top:305px" width="140" height="80" viewBox="0 0 140 80">
<defs><linearGradient id="ig" x1="0" y1="0" x2="0" y2="1"><stop offset="0" stop-color="#e8e8e8"/><stop offset="1" stop-color="#b8b8b8"/></linearGradient>
<linearGradient id="ig2" x1="0" y1="0" x2="1" y2="1"><stop offset="0" stop-color="#606060"/><stop offset="1" stop-color="#e0e0e0"/></linearGradient></defs>
<g fill="none" stroke="#d8d8d8" stroke-width="1.4">
<!-- sun -->
<circle cx="23" cy="14.5" r="4" fill="#d0d0d0" stroke="none"/>
<path d="M23 7.5V9.5M23 19.5V21.5M16 14.5H18M28 14.5H30M18 9.5L19.3 10.8M26.7 18.2L28 19.5M28 9.5L26.7 10.8M19.3 18.2L18 19.5"/>
</g>
<path d="M37 21V15L39 13V17L41 11V17L43 8V17L45 10V15L47 12V17L49 14V17L51 13V17L53 15V21Z" fill="url(#ig)"/>
<rect x="61.5" y="7.5" width="14" height="13" fill="#5a5a5a" stroke="#d0d0d0" stroke-width="1"/>
<path d="M61.5 12H75.5M61.5 16.5H75.5M66 7.5V20.5M71 7.5V20.5" stroke="#9a9a9a" stroke-width="0.7"/>
<path d="M62 20 C68 20 69 8 75 8" fill="none" stroke="#e8e8e8" stroke-width="1.3"/>
<rect x="83.5" y="7.5" width="15" height="13" fill="url(#ig)" stroke="#d0d0d0" stroke-width="1"/>
<path d="M84 20L98 8V20Z" fill="#505050"/>
<path d="M85.5 11H89.5M87.5 9V13M92 17.5H96" stroke="#222" stroke-width="1"/>
<path d="M106.5 8H121L113.8 21Z" fill="url(#ig2)"/>
<rect x="4.5" y="32.5" width="15" height="13" fill="url(#ig2)" stroke="#d0d0d0" stroke-width="1"/>
<rect x="5" y="33" width="14" height="5" fill="#bdbdbd"/>
<path d="M34 33V43M28 36H40" stroke="#d8d8d8" stroke-width="1.4" fill="none"/><rect x="32" y="31.5" width="4" height="3" fill="#d8d8d8"/>
<path d="M28 36L25.5 41.5M28 36L30.5 41.5M40 36L37.5 41.5M40 36L42.5 41.5" stroke="#d8d8d8" stroke-width="0.9" fill="none"/>
<path d="M25 41.5Q28 46 31 41.5ZM37 41.5Q40 46 43 41.5Z" fill="#d8d8d8"/>
<rect x="49.5" y="32.5" width="15" height="13" fill="#d8d8d8" stroke="#d0d0d0" stroke-width="1"/>
<rect x="50.5" y="33.5" width="6" height="11" fill="#555"/>
<rect x="71.5" y="34.5" width="12" height="8" fill="#cfcfcf" stroke="#e0e0e0" stroke-width="1"/>
<circle cx="82.5" cy="42" r="5" fill="#9a9a9a" stroke="#e0e0e0" stroke-width="1.2"/>
<circle cx="77" cy="37.5" r="2.2" fill="#555"/>
<circle cx="103" cy="36" r="4" fill="#e0e0e0"/><circle cx="99.5" cy="41.5" r="4" fill="#d0d0d0"/><circle cx="106.5" cy="41.5" r="4" fill="#d0d0d0"/>
<path d="M101 38.5L103 41L105 38.5" stroke="#444" stroke-width="1.2" fill="none"/>
<rect x="117.5" y="32.5" width="15" height="13" fill="#d8d8d8" stroke="#d0d0d0" stroke-width="1"/>
<path d="M117.5 37H132.5M117.5 41.5H132.5M122.5 32.5V45.5M127.5 32.5V45.5" stroke="#666" stroke-width="1"/>
<rect x="16.5" y="59.5" width="15" height="12" fill="url(#ig)" stroke="#e0e0e0" stroke-width="1"/>
<ellipse cx="24" cy="65.5" rx="4" ry="3.5" fill="#555"/>
<rect x="38.5" y="59.5" width="15" height="12" fill="url(#ig2)" stroke="#e0e0e0" stroke-width="1"/>
<rect x="61.5" y="59.5" width="15" height="12" fill="#d8d8d8" stroke="#e0e0e0" stroke-width="1"/>
<path d="M62 67L66 63L69 65L73 61L76 62" stroke="#333" stroke-width="2" fill="none"/>
<rect x="83.5" y="59.5" width="15" height="12" fill="#8a8a8a" stroke="#e0e0e0" stroke-width="1"/>
<path d="M84 60L91 65.5L84 71ZM98 60L91 65.5L98 71Z" fill="#bdbdbd"/>
<rect x="106.5" y="59.5" width="15" height="12" fill="url(#ig2)" stroke="#e0e0e0" stroke-width="1"/>
</svg>
<div class="a" style="left:1051px;top:386px;width:226px;height:3px;background:#333"></div>

<div class="a" style="left:1051px;top:389px;width:226px;height:15px;background:#424242"></div>
<div class="a" style="left:1051px;top:389px;width:41px;height:15px;background:#535353"></div>
<div class="a" style="left:1145px;top:389px;width:1px;height:15px;background:#3a3a3a"></div>
<div class="a" style="left:1184px;top:389px;width:1px;height:15px;background:#3a3a3a"></div>
<div class="a" style="left:1058px;top:390.5px;font-size:9.6px;letter-spacing:-0.1px;color:#f0f0f0">Layers</div>
<div class="a" style="left:1099px;top:390.5px;font-size:9.6px;letter-spacing:-0.1px;color:#9c9c9c">Channels</div>
<div class="a" style="left:1152px;top:390.5px;font-size:9.6px;letter-spacing:-0.1px;color:#9c9c9c">Paths</div>
<svg class="a" style="left:1259px;top:392px" width="15" height="10"><path d="M0 2.5H5L2.5 5.5z" fill="#d0d0d0"/><path d="M6 1.5H14M6 4.5H14M6 7.5H14" stroke="#d0d0d0" stroke-width="1.2"/></svg>
<div class="a" style="left:1057px;top:409px;width:82px;height:17px;background:linear-gradient(#5e5e5e,#4c4c4c);border:1px solid #3a3a3a;border-radius:2px"></div>
<svg class="a" style="left:1062px;top:411px" width="12" height="12"><circle cx="7" cy="5" r="3.6" fill="none" stroke="#e0e0e0" stroke-width="1.3"/><path d="M4.5 7.5L1 11" stroke="#e0e0e0" stroke-width="1.6"/></svg>
<div class="a" style="left:1075px;top:410.5px;font-size:9.6px;letter-spacing:-0.1px;color:#e8e8e8">Kind</div>
<svg class="a" style="left:1130px;top:412px" width="7" height="11"><path d="M0.5 4.5L3.5 1L6.5 4.5zM0.5 6.5L3.5 10L6.5 6.5z" fill="#e0e0e0"/></svg>
<svg class="a" style="left:1149px;top:410px" width="110" height="16">
<rect x="0.5" y="2.5" width="13" height="10" fill="none" stroke="#d8d8d8" stroke-width="1"/><path d="M2 11L5.5 7L8 9L10 7.5L12 11Z" fill="#d8d8d8"/><circle cx="10" cy="5" r="1" fill="#d8d8d8"/>
<circle cx="30" cy="7.5" r="5.5" fill="#d8d8d8"/><path d="M26 11.5L34 3.5A5.5 5.5 0 0 1 26 11.5Z" fill="#555"/>
<path d="M46 2.5H56M51 2.5V13M48.5 13H53.5M46 2.5V4.5M56 2.5V4.5" stroke="#d8d8d8" stroke-width="1.5" fill="none"/>
<rect x="70.5" y="3.5" width="10" height="9" fill="none" stroke="#d8d8d8" stroke-width="1"/><rect x="69" y="2" width="3" height="3" fill="#d8d8d8"/><rect x="79" y="2" width="3" height="3" fill="#d8d8d8"/><rect x="69" y="11" width="3" height="3" fill="#d8d8d8"/><rect x="79" y="11" width="3" height="3" fill="#d8d8d8"/>
<path d="M96 1H100L103 4V11H96Z" fill="#d8d8d8"/><path d="M92 6H98V14H92Z" fill="#d8d8d8"/><path d="M92 6H98V14H92Z" fill="none" stroke="#555" stroke-width="0.8"/>
</svg>
<div class="a" style="left:1266px;top:409px;width:7px;height:18px;background:#3a3a3a;border:1px solid #333"></div>
<div class="a" style="left:1267px;top:410px;width:5px;height:8px;background:#8a8a8a"></div>
<div class="a" style="left:1051px;top:429px;width:226px;height:1px;background:#474747"></div>
<div class="a" style="left:1057px;top:435px;width:119px;height:17px;background:linear-gradient(#5e5e5e,#4c4c4c);border:1px solid #3a3a3a;border-radius:2px"></div>
<div class="a" style="left:1063px;top:436.5px;font-size:9.6px;letter-spacing:-0.1px;color:#e8e8e8">Normal</div>
<svg class="a" style="left:1167px;top:438px" width="7" height="11"><path d="M0.5 4.5L3.5 1L6.5 4.5zM0.5 6.5L3.5 10L6.5 6.5z" fill="#e0e0e0"/></svg>
<div class="a" style="left:1183px;top:436.5px;font-size:9.6px;letter-spacing:-0.1px;color:#e8e8e8">Opacity:</div>
<div class="a" style="left:1223px;top:434px;width:33px;height:19px;background:#383838"></div>
<div class="a" style="left:1255px;top:434px;width:17px;height:19px;background:linear-gradient(#6c6c6c,#5a5a5a);border:1px solid #3a3a3a"></div>
<div class="a" style="left:1227px;top:437px;font-size:9.6px;letter-spacing:-0.1px;color:#e8e8e8">100%</div>
<svg class="a" style="left:1260px;top:442px" width="7" height="4"><path d="M0 0H7L3.5 4z" fill="#e0e0e0"/></svg>
<div class="a" style="left:1051px;top:456.5px;width:226px;height:1px;background:#474747"></div>
<div class="a" style="left:1058px;top:463.5px;font-size:9.6px;letter-spacing:-0.1px;color:#e8e8e8">Lock:</div>
<svg class="a" style="left:1087px;top:463px" width="80" height="14">
<rect x="0" y="1" width="11" height="11" fill="#d8d8d8"/><rect x="0" y="1" width="3.6" height="3.6" fill="#7a7a7a"/><rect x="7.3" y="1" width="3.7" height="3.6" fill="#7a7a7a"/><rect x="3.6" y="4.6" width="3.7" height="3.7" fill="#7a7a7a"/><rect x="0" y="8.3" width="3.6" height="3.7" fill="#7a7a7a"/><rect x="7.3" y="8.3" width="3.7" height="3.7" fill="#7a7a7a"/>
<path d="M20 13Q21 9 24 9L31 1" stroke="#d8d8d8" stroke-width="2" fill="none"/><path d="M19 13Q23 13 24 10" stroke="#d8d8d8" stroke-width="1.5" fill="none"/>
<path d="M48 1V13M42 7H54" stroke="#d8d8d8" stroke-width="1.3"/><path d="M48 0L45.5 3H50.5ZM48 14L45.5 11H50.5ZM41 7L44 4.5V9.5ZM55 7L52 4.5V9.5Z" fill="#d8d8d8"/>
<path d="M65 6V4A3 3 0 0 1 71 4V6" stroke="#d8d8d8" stroke-width="1.5" fill="none"/><rect x="63" y="6" width="10" height="8" fill="#d8d8d8"/><rect x="67.3" y="8.5" width="1.5" height="3" fill="#555"/>
</svg>
<div class="a" style="left:1205px;top:462.5px;font-size:9.6px;letter-spacing:-0.1px;color:#e8e8e8">Fill:</div>
<div class="a" style="left:1223px;top:460px;width:33px;height:19px;background:#3a3a3a"></div>
<div class="a" style="left:1255px;top:460px;width:17px;height:19px;background:linear-gradient(#6c6c6c,#5a5a5a);border:1px solid #3a3a3a"></div>
<div class="a" style="left:1227px;top:463px;font-size:9.6px;letter-spacing:-0.1px;color:#e8e8e8">100%</div>
<svg class="a" style="left:1260px;top:468px" width="7" height="4"><path d="M0 0H7L3.5 4z" fill="#e0e0e0"/></svg>
<div class="a" style="left:1051px;top:483.5px;width:226px;height:1px;background:#3c3c3c"></div>
<div class="a" style="left:1051px;top:484.5px;width:226px;height:177px;overflow:hidden">
<div class="a" style="left:-1051px;top:-484.5px;width:1280px;height:720px">
<div class="a" style="left:1081px;top:484.50px;width:182px;height:24.45px;background:#687a8c"></div>
<div class="a" style="left:1051px;top:507.95px;width:212px;height:1px;background:#3c3c3c"></div>
<div class="a" style="left:1081px;top:484.50px;width:1px;height:24.45px;background:#3c3c3c"></div>
<svg class="a" style="left:1058.5px;top:491.50px" width="14" height="10"><path d="M0.3 5Q7 -2 13.7 5Q7 12 0.3 5Z" fill="#d4d4d4"/><circle cx="7" cy="5" r="3" fill="#333"/><circle cx="7" cy="5" r="1.3" fill="#d4d4d4"/></svg>
<svg class="a" style="left:1084px;top:487.50px" width="30" height="18"><defs><pattern id="ck0" width="8" height="8" patternUnits="userSpaceOnUse"><rect width="8" height="8" fill="#fff"/><rect width="4" height="4" fill="#d8d8d8"/><rect x="4" y="4" width="4" height="4" fill="#d8d8d8"/></pattern></defs><rect x="0" y="0" width="30" height="18" fill="#2a2a2a"/><rect x="1" y="1" width="28" height="16" fill="url(#ck0)"/></svg>
<div class="a" style="left:1082px;top:485.50px;width:34px;height:22px;border:1px solid #e8eef4;background:transparent"></div>
<div class="a" style="left:1088px;top:484.50px;width:22px;height:24px;background:transparent;border-top:2px solid #687a8c;border-bottom:2px solid #687a8c"></div>
<div class="a" style="left:1123px;top:491.00px;font-size:9.6px;letter-spacing:-0.1px;color:#ececec">Layer 7</div>
<div class="a" style="left:1051px;top:532.40px;width:212px;height:1px;background:#3c3c3c"></div>
<div class="a" style="left:1081px;top:508.95px;width:1px;height:24.45px;background:#3c3c3c"></div>
<svg class="a" style="left:1058.5px;top:515.95px" width="14" height="10"><path d="M0.3 5Q7 -2 13.7 5Q7 12 0.3 5Z" fill="#d4d4d4"/><circle cx="7" cy="5" r="3" fill="#333"/><circle cx="7" cy="5" r="1.3" fill="#d4d4d4"/></svg>
<svg class="a" style="left:1084px;top:511.95px" width="30" height="18"><defs><pattern id="ck1" width="8" height="8" patternUnits="userSpaceOnUse"><rect width="8" height="8" fill="#fff"/><rect width="4" height="4" fill="#d8d8d8"/><rect x="4" y="4" width="4" height="4" fill="#d8d8d8"/></pattern></defs><rect x="0" y="0" width="30" height="18" fill="#2a2a2a"/><rect x="1" y="1" width="28" height="16" fill="url(#ck1)"/><ellipse cx="14" cy="8" rx="3" ry="4.5" fill="#d9a090"/></svg>
<div class="a" style="left:1123px;top:515.45px;font-size:9.6px;letter-spacing:-0.1px;color:#ececec">Layer 1</div>
<div class="a" style="left:1051px;top:556.85px;width:212px;height:1px;background:#3c3c3c"></div>
<div class="a" style="left:1081px;top:533.40px;width:1px;height:24.45px;background:#3c3c3c"></div>
<svg class="a" style="left:1058.5px;top:540.40px" width="14" height="10"><path d="M0.3 5Q7 -2 13.7 5Q7 12 0.3 5Z" fill="#d4d4d4"/><circle cx="7" cy="5" r="3" fill="#333"/><circle cx="7" cy="5" r="1.3" fill="#d4d4d4"/></svg>
<svg class="a" style="left:1084px;top:536.40px" width="30" height="18"><defs><pattern id="ck2" width="8" height="8" patternUnits="userSpaceOnUse"><rect width="8" height="8" fill="#fff"/><rect width="4" height="4" fill="#d8d8d8"/><rect x="4" y="4" width="4" height="4" fill="#d8d8d8"/></pattern></defs><rect x="0" y="0" width="30" height="18" fill="#2a2a2a"/><rect x="1" y="1" width="28" height="16" fill="url(#ck2)"/><rect x="12" y="9" width="5" height="3" fill="#d8d4e0" opacity="0.6"/></svg>
<div class="a" style="left:1123px;top:539.90px;font-size:9.6px;letter-spacing:-0.1px;color:#ececec">Layer 5</div>
<div class="a" style="left:1051px;top:581.30px;width:212px;height:1px;background:#3c3c3c"></div>
<div class="a" style="left:1081px;top:557.85px;width:1px;height:24.45px;background:#3c3c3c"></div>
<svg class="a" style="left:1058.5px;top:564.85px" width="14" height="10"><path d="M0.3 5Q7 -2 13.7 5Q7 12 0.3 5Z" fill="#d4d4d4"/><circle cx="7" cy="5" r="3" fill="#333"/><circle cx="7" cy="5" r="1.3" fill="#d4d4d4"/></svg>
<svg class="a" style="left:1084px;top:560.85px" width="30" height="18"><defs><pattern id="ck3" width="8" height="8" patternUnits="userSpaceOnUse"><rect width="8" height="8" fill="#fff"/><rect width="4" height="4" fill="#d8d8d8"/><rect x="4" y="4" width="4" height="4" fill="#d8d8d8"/></pattern></defs><rect x="0" y="0" width="30" height="18" fill="#2a2a2a"/><rect x="1" y="1" width="28" height="16" fill="url(#ck3)"/><rect x="13" y="13" width="3" height="2" fill="#777"/></svg>
<div class="a" style="left:1123px;top:564.35px;font-size:9.6px;letter-spacing:-0.1px;color:#ececec">Layer 6</div>
<div class="a" style="left:1051px;top:605.75px;width:212px;height:1px;background:#3c3c3c"></div>
<div class="a" style="left:1081px;top:582.30px;width:1px;height:24.45px;background:#3c3c3c"></div>
<svg class="a" style="left:1058.5px;top:589.30px" width="14" height="10"><path d="M0.3 5Q7 -2 13.7 5Q7 12 0.3 5Z" fill="#d4d4d4"/><circle cx="7" cy="5" r="3" fill="#333"/><circle cx="7" cy="5" r="1.3" fill="#d4d4d4"/></svg>
<svg class="a" style="left:1084px;top:585.30px" width="30" height="18"><defs><pattern id="ck4" width="8" height="8" patternUnits="userSpaceOnUse"><rect width="8" height="8" fill="#fff"/><rect width="4" height="4" fill="#d8d8d8"/><rect x="4" y="4" width="4" height="4" fill="#d8d8d8"/></pattern></defs><rect x="0" y="0" width="30" height="18" fill="#2a2a2a"/><rect x="1" y="1" width="28" height="16" fill="url(#ck4)"/><path d="M11 10L17 10L14 14Z" fill="#8a5a48"/></svg>
<div class="a" style="left:1123px;top:588.80px;font-size:9.6px;letter-spacing:-0.1px;color:#ececec">Layer 4</div>
<div class="a" style="left:1051px;top:630.20px;width:212px;height:1px;background:#3c3c3c"></div>
<div class="a" style="left:1081px;top:606.75px;width:1px;height:24.45px;background:#3c3c3c"></div>
<svg class="a" style="left:1058.5px;top:613.75px" width="14" height="10"><path d="M0.3 5Q7 -2 13.7 5Q7 12 0.3 5Z" fill="#d4d4d4"/><circle cx="7" cy="5" r="3" fill="#333"/><circle cx="7" cy="5" r="1.3" fill="#d4d4d4"/></svg>
<svg class="a" style="left:1084px;top:609.75px" width="30" height="18"><defs><pattern id="ck5" width="8" height="8" patternUnits="userSpaceOnUse"><rect width="8" height="8" fill="#fff"/><rect width="4" height="4" fill="#d8d8d8"/><rect x="4" y="4" width="4" height="4" fill="#d8d8d8"/></pattern></defs><rect x="0" y="0" width="30" height="18" fill="#2a2a2a"/><rect x="1" y="1" width="28" height="16" fill="url(#ck5)"/><path d="M11 9L17 9L14 13Z" fill="#e0b8b0" opacity="0.7"/></svg>
<div class="a" style="left:1123px;top:613.25px;font-size:9.6px;letter-spacing:-0.1px;color:#ececec">Layer 3</div>
<div class="a" style="left:1051px;top:654.65px;width:212px;height:1px;background:#3c3c3c"></div>
<div class="a" style="left:1081px;top:631.20px;width:1px;height:24.45px;background:#3c3c3c"></div>
<svg class="a" style="left:1058.5px;top:638.20px" width="14" height="10"><path d="M0.3 5Q7 -2 13.7 5Q7 12 0.3 5Z" fill="#d4d4d4"/><circle cx="7" cy="5" r="3" fill="#333"/><circle cx="7" cy="5" r="1.3" fill="#d4d4d4"/></svg>
<svg class="a" style="left:1084px;top:634.20px" width="30" height="18"><defs><pattern id="ck6" width="8" height="8" patternUnits="userSpaceOnUse"><rect width="8" height="8" fill="#fff"/><rect width="4" height="4" fill="#d8d8d8"/><rect x="4" y="4" width="4" height="4" fill="#d8d8d8"/></pattern></defs><rect x="0" y="0" width="30" height="18" fill="#2a2a2a"/><rect x="1" y="1" width="28" height="16" fill="url(#ck6)"/><ellipse cx="14" cy="6" rx="5" ry="3.5" fill="#5c4638"/></svg>
<div class="a" style="left:1123px;top:637.70px;font-size:9.6px;letter-spacing:-0.1px;color:#ececec">Layer 2</div>
<div class="a" style="left:1051px;top:679.10px;width:212px;height:1px;background:#3c3c3c"></div>
<div class="a" style="left:1081px;top:655.65px;width:1px;height:24.45px;background:#3c3c3c"></div>
<svg class="a" style="left:1058.5px;top:662.65px" width="14" height="10"><path d="M0.3 5Q7 -2 13.7 5Q7 12 0.3 5Z" fill="#d4d4d4"/><circle cx="7" cy="5" r="3" fill="#333"/><circle cx="7" cy="5" r="1.3" fill="#d4d4d4"/></svg>
<svg class="a" style="left:1084px;top:658.65px" width="30" height="18"><defs><pattern id="ck7" width="8" height="8" patternUnits="userSpaceOnUse"><rect width="8" height="8" fill="#fff"/><rect width="4" height="4" fill="#d8d8d8"/><rect x="4" y="4" width="4" height="4" fill="#d8d8d8"/></pattern></defs><rect x="0" y="0" width="30" height="18" fill="#2a2a2a"/><rect x="1" y="1" width="28" height="16" fill="#efeaea"/><ellipse cx="15" cy="5" rx="3.5" ry="3" fill="#4a3a30"/><path d="M8 17Q15 9 22 17Z" fill="#444"/></svg>
</div></div>
<div class="a" style="left:1263px;top:484.5px;width:14px;height:178px;background:#3c3c3c"></div>
<div class="a" style="left:1265px;top:502px;width:10.5px;height:131px;background:linear-gradient(90deg,#808080,#6a6a6a);border-radius:3px"></div>
<svg class="a" style="left:1267px;top:489px" width="7" height="4"><path d="M0 4H7L3.5 0z" fill="#e0e0e0"/></svg>
<svg class="a" style="left:1267px;top:652px" width="7" height="4"><path d="M0 0H7L3.5 4z" fill="#e0e0e0"/></svg>
<div class="a" style="left:1051px;top:661.5px;width:226px;height:20.5px;background:#535353;border-top:1px solid #3c3c3c"></div>
<svg class="a" style="left:1085px;top:667px" width="170" height="14">
<path d="M4 4H2.5A3 3 0 0 0 2.5 10H4M8 4H9.5A3 3 0 0 1 9.5 10H8M4 7H8" stroke="#c8c8c8" stroke-width="1.3" fill="none"/>
<text x="28" y="11" font-family="Liberation Serif" font-style="italic" font-size="12" fill="#c8c8c8">fx</text><path d="M40 11h2.5l-1.25 1.5z" fill="#c8c8c8"/>
<rect x="54" y="2" width="12" height="10" fill="#d0d0d0"/><circle cx="60" cy="7" r="3" fill="#444"/>
<circle cx="81" cy="7" r="5" fill="#d0d0d0"/><path d="M77.5 10.5L84.5 3.5A5 5 0 0 1 77.5 10.5Z" fill="#444"/><path d="M87 11h2.5l-1.25 1.5z" fill="#c8c8c8"/>
<path d="M102 3H107L108.5 4.5H114V12H102Z" fill="#d0d0d0"/>
<path d="M128 2H138V12H131V6H128Z" fill="#d0d0d0"/><path d="M128 6H131V12Z" fill="#888"/>
<rect x="152" y="3" width="11" height="1.5" fill="#c8c8c8"/><rect x="155.5" y="1.5" width="4" height="1.5" fill="#c8c8c8"/><path d="M153 5.5H162L161.3 12.5H153.7z" fill="none" stroke="#c8c8c8" stroke-width="1"/><path d="M155.5 6.5V11.5M157.5 6.5V11.5M159.5 6.5V11.5" stroke="#c8c8c8" stroke-width="0.8"/>
</svg>


<div class="a" style="left:1277px;top:0;width:3px;height:682px;background:#1e1e1e"></div>
<!-- taskbar -->
<div class="a" style="left:0;top:682px;width:1280px;height:38px;background:#000"></div>
<div class="a" style="left:47px;top:682px;width:323px;height:38px;background:#313131"></div>
<svg class="a" style="left:17px;top:693px" width="16" height="16"><path d="M0 2.2L6.6 1.3V7.5H0ZM7.4 1.2L16 0V7.5H7.4ZM0 8.4H6.6V14.7L0 13.8ZM7.4 8.4H16V16L7.4 14.8Z" fill="#fff"/></svg>
<svg class="a" style="left:55px;top:690px" width="22" height="22"><circle cx="11" cy="11" r="8.8" fill="none" stroke="#e8e8e8" stroke-width="2.2"/></svg>
<div class="a" style="left:81px;top:693.5px;font-size:14px;color:#a6a6a6">Ask me anything</div>
<svg class="a" style="left:345px;top:692px" width="11" height="17"><rect x="3" y="0.8" width="5" height="10" rx="2.5" fill="none" stroke="#9a9a9a" stroke-width="1.2"/><path d="M1 7.5Q1 13 5.5 13Q10 13 10 7.5M5.5 13V16.5" fill="none" stroke="#9a9a9a" stroke-width="1.2"/></svg>
<svg class="a" style="left:382px;top:693px" width="21" height="16"><rect x="4.5" y="1.5" width="12" height="13" fill="none" stroke="#fff" stroke-width="1.4"/><path d="M1 3.5V12.5M20 3.5V12.5" stroke="#fff" stroke-width="1.4"/></svg>
<svg class="a" style="left:430px;top:690px" width="20" height="21"><path d="M2 12C2 5 7 1 11.5 1C16.5 1 19.5 4.5 19.5 10V12H7.5C8 16 11 17 13.5 17C15.5 17 17.5 16.2 19 15.3V19.3C17.3 20.2 15.3 20.7 13 20.7C5.5 20.7 2 16.8 2 12ZM7.5 8.6H14.5C14.4 6.4 13.3 4.8 11.2 4.8C9.2 4.8 7.9 6.4 7.5 8.6Z" fill="#1e7bd6"/></svg>
<svg class="a" style="left:476px;top:691px" width="20" height="20" viewBox="0 0 20 20"><circle cx="10" cy="10" r="9.5" fill="#db4437"/><path d="M10 10L1.8 5.3A9.5 9.5 0 0 0 5.3 18.3Z" fill="#0f9d58"/><path d="M10 10L5.3 18.3A9.5 9.5 0 0 0 18.2 5.3Z" fill="#f4b400"/><path d="M10 10L18.2 5.3A9.5 9.5 0 0 0 10 0.5A9.5 9.5 0 0 0 1.8 5.3Z" fill="#db4437"/><circle cx="10" cy="10" r="4.6" fill="#fff"/><circle cx="10" cy="10" r="3.6" fill="#4285f4"/></svg>
<svg class="a" style="left:522px;top:690px" width="20" height="22"><path d="M6 5V3.5A4 4 0 0 1 14 3.5V5" fill="none" stroke="#fff" stroke-width="1.5"/><path d="M1 5H19V21H1Z" fill="#fff"/><path d="M5.5 9H9.5V12.8H5.5ZM10.5 9H14.5V12.8H10.5ZM5.5 13.8H9.5V17.5H5.5ZM10.5 13.8H14.5V17.5H10.5Z" fill="#000"/></svg>
<svg class="a" style="left:568px;top:692px" width="20" height="17"><path d="M0 1H7L9 3H20V16H0Z" fill="#e8c26a"/><path d="M0 5H20V16H0Z" fill="#f6d77d"/><rect x="5" y="10" width="10" height="6" fill="#4aa3d8"/><rect x="7" y="10" width="6" height="2" fill="#2a6f9a"/></svg>
<svg class="a" style="left:612px;top:689px" width="23" height="23"><rect x="0" y="0" width="23" height="23" rx="3" fill="#f28a1c"/><rect x="0" y="0" width="23" height="12" rx="3" fill="#f6a33a"/><path d="M5 17C5 12 8 9 12 9C10 11 10 14 12 15C14 16 17 14 17 11C19 13 19 18 15 19C12 20 7 20 5 17Z" fill="#fff"/><circle cx="12" cy="14" r="2" fill="#f28a1c"/><path d="M13 5L18 8L15 9Z" fill="#fff"/></svg>
<svg class="a" style="left:659px;top:690px" width="21" height="21"><rect x="0" y="0" width="21" height="21" rx="3" fill="#2f3a45"/><path d="M4 17L11 10L14 13L8 19Z" fill="#5cd3c0"/><path d="M11 3H17V9H11Z" fill="#e8f0f0" transform="rotate(45 14 6)"/></svg>
<div class="a" style="left:693.5px;top:682px;width:45px;height:38px;background:#333"></div>
<div class="a" style="left:651.5px;top:718px;width:37px;height:2px;background:#7eaedb"></div>
<div class="a" style="left:693.5px;top:718px;width:45px;height:2px;background:#7eaedb"></div>
<div class="a" style="left:704.5px;top:690.5px;width:21px;height:20px;background:#0c1a2a;border:1.5px solid #31a8ff"></div>
<div class="a" style="left:707.5px;top:693px;font-size:11px;font-weight:bold;color:#31a8ff">Ps</div>
<svg class="a" style="left:1049px;top:695px" width="13" height="9"><path d="M1 8L6.5 2L12 8" fill="none" stroke="#fff" stroke-width="1.5"/></svg>
<svg class="a" style="left:1070px;top:694px" width="16" height="14"><rect x="4.5" y="4.5" width="10" height="7" fill="none" stroke="#fff" stroke-width="1.3"/><rect x="14.5" y="6.5" width="1.5" height="3" fill="#fff"/><rect x="6" y="6" width="5" height="4" fill="#fff"/><path d="M1 1V6M0 3H3" stroke="#fff" stroke-width="1.2"/></svg>
<svg class="a" style="left:1092px;top:692px" width="17" height="16"><g transform="rotate(90 8.5 8)"><path d="M7.5 0.5L9.5 0.5L10 6L16 9V10.5L10 9L9.5 13.5L11.5 15V16L8.5 15.3L5.5 16V15L7.5 13.5L7 9L1 10.5V9L7 6Z" fill="none" stroke="#fff" stroke-width="1.1" transform="translate(0,0)"/></g></svg>
<svg class="a" style="left:1115px;top:693px" width="16" height="15"><path d="M1 5H4L8 1.5V13.5L4 10H1Z" fill="none" stroke="#fff" stroke-width="1.2"/><path d="M10 5Q11.5 7.5 10 10M12 3Q14.5 7.5 12 12" fill="none" stroke="#fff" stroke-width="1.2"/></svg>
<div class="a" style="left:1139px;top:694px;font-size:11.5px;color:#fff">ENG</div>
<div class="a" style="left:1178px;top:686px;font-size:11px;color:#fff">9:54 PM</div>
<div class="a" style="left:1174px;top:703px;font-size:11.2px;color:#fff">1/13/2017</div>
<svg class="a" style="left:1238px;top:691px" width="26" height="24"><path d="M1 1H17V13H9L5 17V13H1Z" fill="#fff"/><path d="M4 4.5H14M4 7H14M4 9.5H11" stroke="#000" stroke-width="1"/><circle cx="17" cy="15" r="8" fill="#333" stroke="#000" stroke-width="1.2"/><text x="17" y="19" text-anchor="middle" font-family="Liberation Sans" font-size="10" fill="#fff">19</text></svg>
<div class="a" style="left:1273px;top:682px;width:1px;height:38px;background:#555"></div>

</body></html>
